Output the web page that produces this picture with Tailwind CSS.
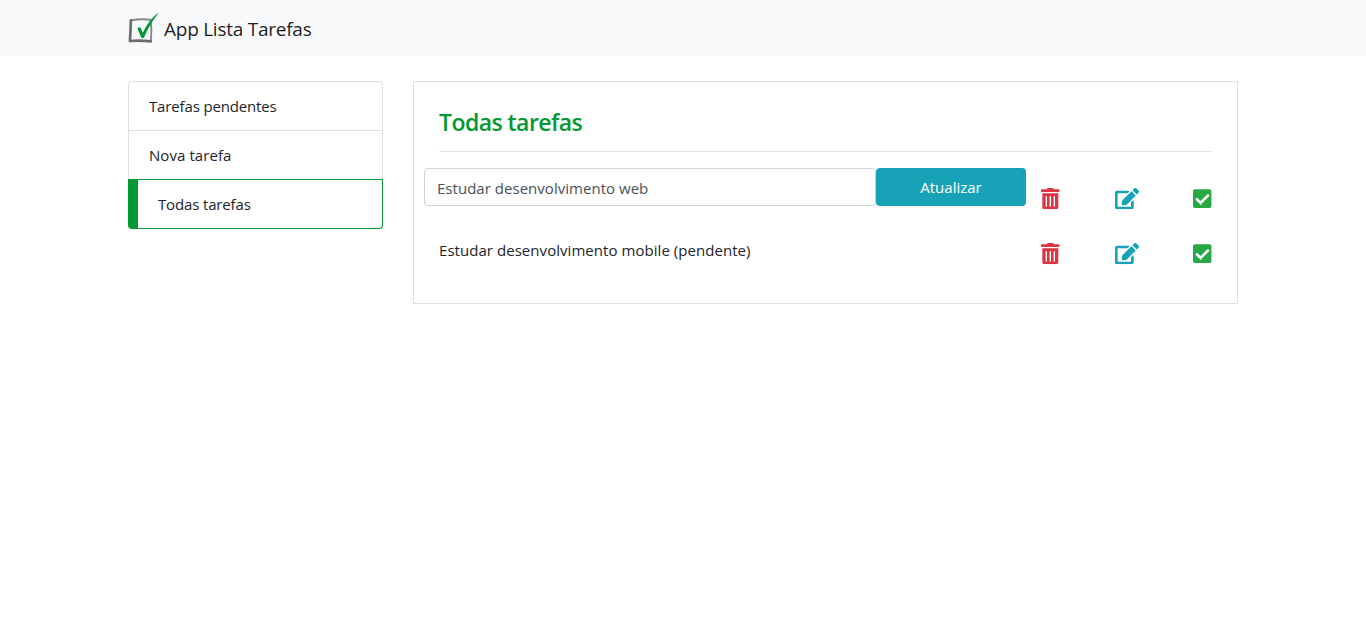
<!DOCTYPE html>
<html lang="pt-br">
<head>
<meta charset="utf-8">
<title>App Lista Tarefas</title>
<script src="https://cdn.jsdelivr.net/npm/@tailwindcss/browser@4"></script>
</head>
<body class="bg-white font-['Segoe_UI','Open_Sans',sans-serif] text-[15px] leading-6 text-[#212529]">
<svg class="hidden">
  <symbol id="trash" viewBox="0 0 448 512"><path fill="currentColor" d="M32 464a48 48 0 0 0 48 48h288a48 48 0 0 0 48-48V128H32zm272-256a16 16 0 0 1 32 0v224a16 16 0 0 1-32 0zm-96 0a16 16 0 0 1 32 0v224a16 16 0 0 1-32 0zm-96 0a16 16 0 0 1 32 0v224a16 16 0 0 1-32 0zM432 32H312l-9.4-18.7A24 24 0 0 0 281.1 0H166.8a23.72 23.72 0 0 0-21.4 13.3L136 32H16A16 16 0 0 0 0 48v32a16 16 0 0 0 16 16h416a16 16 0 0 0 16-16V48a16 16 0 0 0-16-16z"/></symbol>
  <symbol id="edit" viewBox="0 0 576 512"><path fill="currentColor" d="M402.6 83.2l90.2 90.2c3.8 3.8 3.8 10 0 13.8L274.4 405.6l-92.8 10.3c-12.4 1.4-22.9-9.1-21.5-21.5l10.3-92.8L388.8 83.2c3.8-3.8 10-3.8 13.8 0zm162-22.9l-48.8-48.8c-15.2-15.2-39.9-15.2-55.2 0l-35.4 35.4c-3.8 3.8-3.8 10 0 13.8l90.2 90.2c3.8 3.8 10 3.8 13.8 0l35.4-35.4c15.2-15.3 15.2-40 0-55.2zM384 346.2V448H64V128h229.8c3.2 0 6.2-1.3 8.5-3.5l40-40c7.6-7.6 2.2-20.5-8.5-20.5H48C21.5 64 0 85.5 0 112v352c0 26.5 21.5 48 48 48h352c26.5 0 48-21.5 48-48V306.2c0-10.7-12.9-16-20.5-8.5l-40 40c-2.2 2.3-3.5 5.3-3.5 8.5z"/></symbol>
  <symbol id="check" viewBox="0 0 448 512"><path fill="currentColor" d="M400 480H48c-26.51 0-48-21.49-48-48V80c0-26.51 21.49-48 48-48h352c26.51 0 48 21.49 48 48v352c0 26.51-21.49 48-48 48zm-195.066-99.066L392.196 193.67c6.248-6.248 6.248-16.379 0-22.627l-22.628-22.627c-6.248-6.248-16.379-6.249-22.628 0L181.62 313.74l-73.11-73.11c-6.248-6.248-16.379-6.248-22.628 0L63.255 263.26c-6.248 6.248-6.248 16.379 0 22.627l119.05 119.05c6.25 6.248 16.38 6.248 22.629-.001z"/></symbol>
</svg>
<nav class="h-14 bg-[#f8f9fa]">
  <div class="mx-auto flex h-full w-[1110px] items-center">
    <svg class="h-[30px] w-[30px]" viewBox="0 0 30 30" fill="none">
      <path d="M3 7.2Q13 5.6 22.6 6.7Q24 16 22.9 27.6" stroke="#858688" stroke-width="1.9" stroke-linecap="round"/>
      <path d="M2.8 7.6Q2.8 17 1.9 28Q12 27.2 22.7 28.3" stroke="#6b6c6e" stroke-width="2.7" stroke-linecap="round" stroke-linejoin="round"/>
      <path d="M9.4 15.3Q11.2 13.4 12.7 15.1L14.8 19.7Q20.5 7.5 29.3 .4Q30.2 .2 29.7 1.3Q21.5 11.5 16 24.5Q14.6 26 13.2 24.6Z" fill="#009933"/>
    </svg>
    <span class="ml-1.5 pt-0.5 text-[19px] leading-[30px] tracking-[-0.25px] text-black/90">App Lista Tarefas</span>
  </div>
</nav>
<main class="mx-auto mt-[25px] flex w-[1110px] items-start gap-[30px]">
  <ul class="w-[255px] tracking-[-0.15px]">
    <li class="h-[50px] rounded-t border border-[#dfdfdf] px-5 py-3">Tarefas pendentes</li>
    <li class="h-[48px] border-x border-[#dfdfdf] px-5 py-3 tracking-[0.08px]">Nova tarefa</li>
    <li class="h-[50px] rounded-b border border-l-[10px] border-[#009933] px-5 py-3">Todas tarefas</li>
  </ul>
  <section class="h-[223px] w-[825px] border border-[#dfdfdf] px-[25px] pt-[25px]">
    <h4 class="h-11 text-[23px] leading-[31px] font-semibold tracking-[-0.55px] text-[#009933]">Todas tarefas</h4>
    <hr class="border-[#e5e5e5]">
    <div class="-ml-[15px] mt-4 flex h-[38px] w-[788px]">
      <div class="w-[452px] rounded border border-[#ced4da] px-3 py-[7px] tracking-[0.03px] text-[#495057]"><span>Estudar desenvolvimento web</span></div>
      <button class="w-[150px] rounded bg-[#17a2b8] text-white">Atualizar</button>
      <div class="mt-[20.3px] ml-[15.4px] flex h-[22px] flex-1 items-start justify-between">
        <svg class="h-[21.33px] w-[18.67px] text-[#dc3545]"><use href="#trash"/></svg>
        <svg class="h-[21.33px] w-6 text-[#17a2b8]"><use href="#edit"/></svg>
        <svg class="h-[21.33px] w-[18.67px] text-[#28a745]"><use href="#check"/></svg>
      </div>
    </div>
    <div class="mt-[32px] flex">
      <div class="w-[602px] tracking-[0.05px]">Estudar desenvolvimento mobile (pendente)</div>
      <div class="mt-[5.3px] ml-[.4px] flex h-[22px] flex-1 items-start justify-between">
        <svg class="h-[21.33px] w-[18.67px] text-[#dc3545]"><use href="#trash"/></svg>
        <svg class="h-[21.33px] w-6 text-[#17a2b8]"><use href="#edit"/></svg>
        <svg class="h-[21.33px] w-[18.67px] text-[#28a745]"><use href="#check"/></svg>
      </div>
    </div>
  </section>
</main>
</body>
</html>
